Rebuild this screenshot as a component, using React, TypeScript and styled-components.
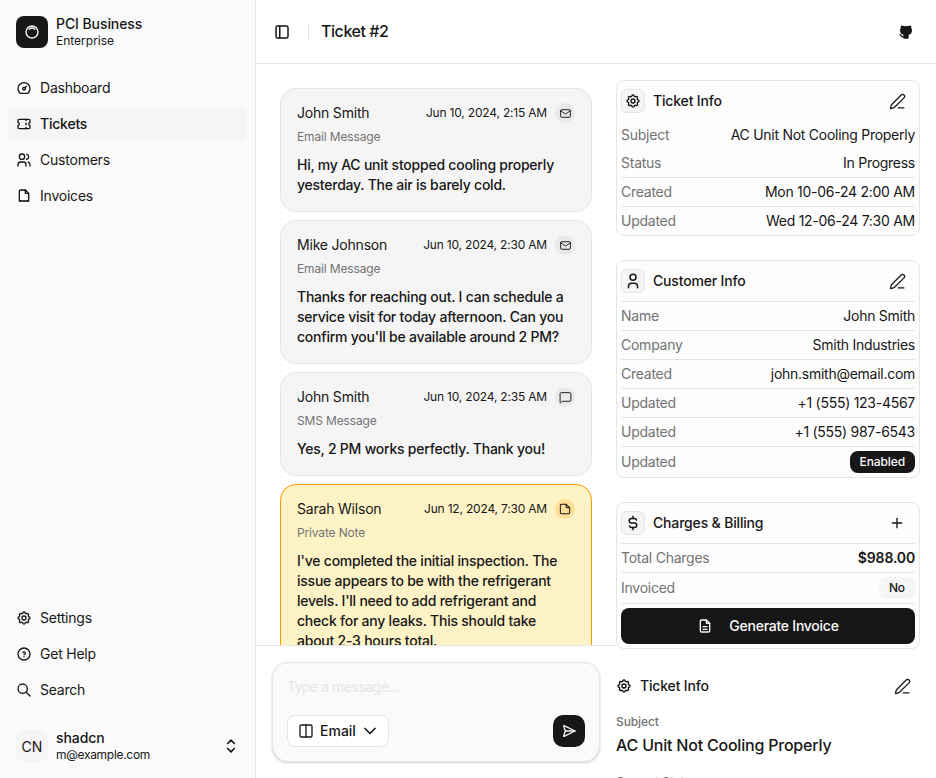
import React from "react";
import styled, { createGlobalStyle } from "styled-components";
import {
  TbBrandGithubFilled,
  TbCurrencyDollar,
  TbDashboard,
  TbFileDescription,
  TbHelpCircle,
  TbInnerShadowTop,
  TbLayoutSidebar,
  TbMail,
  TbPlus,
  TbSearch,
  TbSelector,
  TbSend2,
  TbSettings,
  TbTicket,
  TbUser,
  TbUsers,
  TbChevronDown,
} from "react-icons/tb";
import { Columns2, MessageSquare, PenLine } from "lucide-react";

const GlobalStyle = createGlobalStyle`
  html, body {
    margin: 0;
    padding: 0;
    height: 100%;
    overflow: hidden;
    background: #ffffff;
  }
  * {
    box-sizing: border-box;
  }
  body {
    font-family: Inter, "Liberation Sans", sans-serif;
    font-size: 14px;
    color: #0a0a0a;
  }
`;

const Shell = styled.div`
  display: flex;
  width: 936px;
  height: 778px;
  overflow: hidden;
`;

/* sidebar */
const Sidebar = styled.aside`
  display: flex;
  flex-direction: column;
  flex: 0 0 256px;
  padding: 8px;
  background: #fafafa;
  border-right: 1px solid #e5e5e5;
`;
const Account = styled.div`
  display: flex;
  align-items: center;
  gap: 8px;
  height: 48px;
  padding: 8px;
  flex-shrink: 0;
`;
const LogoBox = styled.div`
  display: flex;
  align-items: center;
  justify-content: center;
  width: 32px;
  height: 32px;
  border-radius: 8px;
  background: #171717;
  color: #fafafa;
`;
const Avatar = styled.div`
  display: flex;
  align-items: center;
  justify-content: center;
  width: 32px;
  height: 32px;
  border-radius: 8px;
  background: #f5f5f5;
  color: #171717;
  font-size: 14px;
`;
const AccountText = styled.div`
  display: flex;
  flex-direction: column;
  flex: 1;
`;
const AccountName = styled.span`
  font-size: 14px;
  line-height: 16px;
  padding-bottom: 1px;
  font-weight: 500;
  letter-spacing: -0.08px;
  color: #171717;
`;
const AccountSub = styled.span<{ $tight?: boolean }>`
  font-size: 12px;
  line-height: 16px;
  letter-spacing: ${(p) => (p.$tight ? "-0.3px" : "0")};
  color: #171717;
`;
const SelectorIcon = styled.span`
  display: flex;
  margin-right: -2px;
  color: #171717;
`;
const NavGroup = styled.nav<{ $bottom?: boolean }>`
  display: flex;
  flex-direction: column;
  gap: 4px;
  margin-top: ${(p) => (p.$bottom ? "auto" : "16px")};
  margin-bottom: ${(p) => (p.$bottom ? "16px" : "0")};
`;
const NavItem = styled.a<{ $active?: boolean }>`
  display: flex;
  align-items: center;
  gap: 8px;
  height: 32px;
  padding: 0 8px;
  border-radius: 8px;
  font-size: 14px;
  color: #171717;
  font-weight: ${(p) => (p.$active ? 500 : 400)};
  background: ${(p) => (p.$active ? "#f5f5f5" : "transparent")};
`;
const NavLabel = styled.span`
  padding-bottom: 2px;
  letter-spacing: -0.22px;
`;

/* main */
const Main = styled.main`
  display: flex;
  flex-direction: column;
  flex: 1;
  min-width: 0;
`;
const TopBar = styled.header`
  display: flex;
  align-items: center;
  flex: 0 0 64px;
  padding: 0 16px 0 17px;
  border-bottom: 1px solid #e5e5e5;
`;
const SidebarToggle = styled.span`
  display: flex;
  color: #171717;
`;
const TopDivider = styled.span`
  width: 1px;
  height: 16px;
  margin: 0 12px 0 17px;
  background: #e5e5e5;
`;
const TopTitle = styled.h1`
  margin: 0;
  flex: 1;
  padding-bottom: 2px;
  font-size: 16px;
  line-height: 24px;
  font-weight: 500;
  letter-spacing: -0.44px;
  color: #171717;
`;
const GithubLink = styled.a`
  display: flex;
  margin-right: 6px;
  color: #171717;
`;
const Content = styled.div`
  display: flex;
  flex: 1;
  min-height: 0;
`;

/* chat */
const ChatColumn = styled.section`
  display: flex;
  flex-direction: column;
  flex: 0 0 360px;
  min-height: 0;
`;
const MessageList = styled.div`
  display: flex;
  flex-direction: column;
  gap: 8px;
  flex: 1;
  min-height: 0;
  overflow: hidden;
  padding: 24px 24px 0;
`;
const MessageCard = styled.article<{ $note?: boolean }>`
  flex-shrink: 0;
  padding: 14px 16px 16px;
  border-radius: 16px;
  border: 1px solid ${(p) => (p.$note ? "#fe9a00" : "#e5e5e5")};
  background: ${(p) => (p.$note ? "#fef3c6" : "#f5f5f5")};
`;
const MessageHead = styled.div`
  display: flex;
  align-items: center;
  height: 20px;
`;
const Sender = styled.span`
  flex: 1;
  padding-bottom: 2px;
  font-size: 14px;
  letter-spacing: -0.2px;
  color: #171717;
`;
const Stamp = styled.span`
  padding-bottom: 2px;
  font-size: 12px;
  letter-spacing: -0.19px;
  color: #171717;
`;
const ChannelDot = styled.span<{ $note?: boolean }>`
  display: flex;
  align-items: center;
  justify-content: center;
  width: 20px;
  height: 20px;
  margin-left: 8px;
  border-radius: 50%;
  background: ${(p) => (p.$note ? "#fedf97" : "#e9e9e9")};
  color: #171717;
`;
const Channel = styled.div`
  margin-top: 6px;
  font-size: 12px;
  line-height: 16px;
  letter-spacing: -0.15px;
  color: #737373;
`;
const MessageBody = styled.p`
  margin: 10px 0 0;
  font-size: 14px;
  line-height: 20px;
  font-weight: 500;
  letter-spacing: -0.23px;
  color: #171717;
`;
const ComposerWrap = styled.div`
  flex: 0 0 133px;
  padding: 16px;
  border-top: 1px solid #e5e5e5;
  background: #ffffff;
`;
const Composer = styled.div`
  display: flex;
  flex-direction: column;
  justify-content: space-between;
  height: 100px;
  padding: 14px 14px 14px;
  border: 1px solid #e5e5e5;
  border-radius: 16px;
  background: #fafafa;
  box-shadow: 0 1px 3px rgba(0, 0, 0, 0.1), 0 1px 2px rgba(0, 0, 0, 0.1);
`;
const Placeholder = styled.div`
  font-size: 14px;
  line-height: 20px;
  letter-spacing: -0.5px;
  color: #e5e5e5;
`;
const ComposerBar = styled.div`
  display: flex;
  align-items: center;
  justify-content: space-between;
`;
const ChannelSelect = styled.button`
  display: flex;
  align-items: center;
  gap: 6px;
  width: 102px;
  height: 32px;
  padding: 0 10px;
  border: 1px solid #e5e5e5;
  border-radius: 8px;
  background: #ffffff;
  font: 500 14px Inter, sans-serif;
  color: #171717;

  svg {
    flex-shrink: 0;
  }
`;
const SelectLabel = styled.span`
  padding-bottom: 2px;
  margin-right: -2px;
`;
const SendButton = styled.button`
  display: flex;
  align-items: center;
  justify-content: center;
  width: 32px;
  height: 32px;
  padding: 0;
  border: 0;
  border-radius: 10px;
  background: #171717;
  color: #fafafa;
`;

/* details */
const Details = styled.section`
  display: flex;
  flex-direction: column;
  gap: 24px;
  flex: 1;
  min-width: 0;
  overflow: hidden;
  padding: 16px 16px 0 0;
`;
const InfoCard = styled.div`
  flex-shrink: 0;
  padding: 4px 4px 0;
  border: 1px solid #e5e5e5;
  border-radius: 8px;
  background: #fdfdfd;
`;
const CardHead = styled.div`
  display: flex;
  align-items: center;
  gap: 8px;
  height: 32px;
  margin-bottom: 4px;
`;
const IconTile = styled.span`
  display: flex;
  align-items: center;
  justify-content: center;
  width: 24px;
  height: 24px;
  border: 1px solid #e5e5e5;
  border-radius: 6px;
  background: #f5f5f5;
  color: #171717;
`;
const CardTitle = styled.span`
  flex: 1;
  padding-bottom: 2px;
  font-size: 14px;
  font-weight: 500;
  letter-spacing: -0.17px;
  color: #171717;
`;
const GhostAction = styled.span`
  display: flex;
  align-items: center;
  justify-content: center;
  width: 36px;
  height: 32px;
  color: #171717;
`;
const Row = styled.div<{ $plain?: boolean; $flush?: boolean }>`
  display: flex;
  align-items: center;
  justify-content: space-between;
  min-height: 28px;
  padding: ${(p) => (p.$flush ? "0" : "4px 0")};
  border-top: ${(p) => (p.$plain ? "0" : "1px solid #e5e5e5")};
  font-size: 14px;
  line-height: 20px;
  letter-spacing: -0.25px;
`;
const RowLabel = styled.span`
  color: #737373;
`;
const RowValue = styled.span<{ $strong?: boolean }>`
  color: #171717;
  font-weight: ${(p) => (p.$strong ? 600 : 400)};
  letter-spacing: ${(p) => (p.$strong ? "-0.15px" : "-0.27px")};
`;
const Pill = styled.span<{ $dark?: boolean }>`
  display: inline-flex;
  align-items: center;
  height: 22px;
  padding: 0 10px;
  border-radius: 8px;
  font-size: 12px;
  font-weight: 500;
  letter-spacing: -0.1px;
  background: ${(p) => (p.$dark ? "#171717" : "#f5f5f5")};
  color: ${(p) => (p.$dark ? "#fafafa" : "#171717")};
`;
const InvoiceButton = styled.button`
  display: flex;
  align-items: center;
  justify-content: center;
  gap: 16px;
  width: 100%;
  height: 36px;
  margin: 4px 0;
  border: 0;
  border-radius: 8px;
  background: #171717;
  color: #fafafa;
  font: 500 14px Inter, sans-serif;
  letter-spacing: -0.25px;
`;
const InvoiceLabel = styled.span`
  padding-bottom: 2px;
`;
const PlainSection = styled.div`
  flex-shrink: 0;
  margin-top: -3px;
`;
const PlainHead = styled.div`
  display: flex;
  align-items: center;
  gap: 8px;
  height: 32px;
`;
const FieldLabel = styled.div<{ $next?: boolean }>`
  margin-top: ${(p) => (p.$next ? "17px" : "12px")};
  font-size: 12px;
  line-height: 16px;
  font-weight: 500;
  letter-spacing: -0.1px;
  color: #737373;
`;
const FieldValue = styled.div`
  margin-top: 3px;
  font-size: 16px;
  line-height: 24px;
  font-weight: 500;
  letter-spacing: -0.21px;
  color: #171717;
`;

const FileIcon: React.FC = () => (
  <svg width="16" height="16" viewBox="0 0 24 24" fill="none" stroke="currentColor" strokeWidth="2" strokeLinecap="round" strokeLinejoin="round">
    <path d="M14 3H7a2 2 0 0 0-2 2v15l1.5-1 1.5 1 2-1 2 1 2-1 2 1 1.5-1 1.5 1V8z" />
    <path d="M14 3v5h5" />
  </svg>
);

const NoteIcon: React.FC = () => (
  <svg width="14" height="14" viewBox="0 0 24 24" fill="none" stroke="currentColor" strokeWidth="1.75" strokeLinecap="round" strokeLinejoin="round">
    <path d="M14 4H6a2 2 0 0 0-2 2v12a2 2 0 0 0 2 2h12a2 2 0 0 0 2-2v-8z" />
    <path d="M14 4v4a2 2 0 0 0 2 2h4" />
  </svg>
);

const messages = [
  {
    sender: "John Smith",
    time: "Jun 10, 2024, 2:15 AM",
    channel: "Email Message",
    icon: <TbMail size={13} strokeWidth={1.75} />,
    text: "Hi, my AC unit stopped cooling properly yesterday. The air is barely cold.",
  },
  {
    sender: "Mike Johnson",
    time: "Jun 10, 2024, 2:30 AM",
    channel: "Email Message",
    icon: <TbMail size={13} strokeWidth={1.75} />,
    text: "Thanks for reaching out. I can schedule a service visit for today afternoon. Can you confirm you'll be available around 2 PM?",
  },
  {
    sender: "John Smith",
    time: "Jun 10, 2024, 2:35 AM",
    channel: "SMS Message",
    icon: <MessageSquare size={13} strokeWidth={1.75} />,
    text: "Yes, 2 PM works perfectly. Thank you!",
  },
  {
    sender: "Sarah Wilson",
    time: "Jun 12, 2024, 7:30 AM",
    channel: "Private Note",
    icon: <NoteIcon />,
    text: "I've completed the initial inspection. The issue appears to be with the refrigerant levels. I'll need to add refrigerant and check for any leaks. This should take about 2-3 hours total.",
    note: true,
  },
];

const App: React.FC = () => {
  return (
    <Shell>
      <GlobalStyle />
      <Sidebar>
        <Account>
          <LogoBox>
            <TbInnerShadowTop size={16} />
          </LogoBox>
          <AccountText>
            <AccountName>PCI Business</AccountName>
            <AccountSub>Enterprise</AccountSub>
          </AccountText>
        </Account>
        <NavGroup>
          <NavItem>
            <TbDashboard size={16} />
            <NavLabel>Dashboard</NavLabel>
          </NavItem>
          <NavItem $active>
            <TbTicket size={16} />
            <NavLabel>Tickets</NavLabel>
          </NavItem>
          <NavItem>
            <TbUsers size={16} />
            <NavLabel>Customers</NavLabel>
          </NavItem>
          <NavItem>
            <FileIcon />
            <NavLabel>Invoices</NavLabel>
          </NavItem>
        </NavGroup>
        <NavGroup $bottom>
          <NavItem>
            <TbSettings size={16} />
            <NavLabel>Settings</NavLabel>
          </NavItem>
          <NavItem>
            <TbHelpCircle size={16} />
            <NavLabel>Get Help</NavLabel>
          </NavItem>
          <NavItem>
            <TbSearch size={16} />
            <NavLabel>Search</NavLabel>
          </NavItem>
        </NavGroup>
        <Account>
          <Avatar>CN</Avatar>
          <AccountText>
            <AccountName>shadcn</AccountName>
            <AccountSub $tight>m@example.com</AccountSub>
          </AccountText>
          <SelectorIcon>
            <TbSelector size={20} />
          </SelectorIcon>
        </Account>
      </Sidebar>
      <Main>
        <TopBar>
          <SidebarToggle>
            <TbLayoutSidebar size={18} />
          </SidebarToggle>
          <TopDivider />
          <TopTitle>Ticket #2</TopTitle>
          <GithubLink>
            <TbBrandGithubFilled size={16} />
          </GithubLink>
        </TopBar>
        <Content>
          <ChatColumn>
            <MessageList>
              {messages.map((item, index) => (
                <MessageCard key={index} $note={item.note}>
                  <MessageHead>
                    <Sender>{item.sender}</Sender>
                    <Stamp>{item.time}</Stamp>
                    <ChannelDot $note={item.note}>{item.icon}</ChannelDot>
                  </MessageHead>
                  <Channel>{item.channel}</Channel>
                  <MessageBody>{item.text}</MessageBody>
                </MessageCard>
              ))}
            </MessageList>
            <ComposerWrap>
              <Composer>
                <Placeholder>Type a message...</Placeholder>
                <ComposerBar>
                  <ChannelSelect>
                    <Columns2 size={16} />
                    <SelectLabel>Email</SelectLabel>
                    <TbChevronDown size={20} />
                  </ChannelSelect>
                  <SendButton>
                    <TbSend2 size={16} />
                  </SendButton>
                </ComposerBar>
              </Composer>
            </ComposerWrap>
          </ChatColumn>
          <Details>
            <InfoCard>
              <CardHead>
                <IconTile>
                  <TbSettings size={16} />
                </IconTile>
                <CardTitle>Ticket Info</CardTitle>
                <GhostAction>
                  <PenLine size={17} strokeWidth={1.75} />
                </GhostAction>
              </CardHead>
              <Row $plain>
                <RowLabel>Subject</RowLabel>
                <RowValue>AC Unit Not Cooling Properly</RowValue>
              </Row>
              <Row $plain>
                <RowLabel>Status</RowLabel>
                <RowValue>In Progress</RowValue>
              </Row>
              <Row>
                <RowLabel>Created</RowLabel>
                <RowValue>Mon 10-06-24 2:00 AM</RowValue>
              </Row>
              <Row>
                <RowLabel>Updated</RowLabel>
                <RowValue>Wed 12-06-24 7:30 AM</RowValue>
              </Row>
            </InfoCard>
            <InfoCard>
              <CardHead>
                <IconTile>
                  <TbUser size={18} />
                </IconTile>
                <CardTitle>Customer Info</CardTitle>
                <GhostAction>
                  <PenLine size={17} strokeWidth={1.75} />
                </GhostAction>
              </CardHead>
              <Row>
                <RowLabel>Name</RowLabel>
                <RowValue>John Smith</RowValue>
              </Row>
              <Row>
                <RowLabel>Company</RowLabel>
                <RowValue>Smith Industries</RowValue>
              </Row>
              <Row>
                <RowLabel>Created</RowLabel>
                <RowValue>john.smith@email.com</RowValue>
              </Row>
              <Row>
                <RowLabel>Updated</RowLabel>
                <RowValue>+1 (555) 123-4567</RowValue>
              </Row>
              <Row>
                <RowLabel>Updated</RowLabel>
                <RowValue>+1 (555) 987-6543</RowValue>
              </Row>
              <Row>
                <RowLabel>Updated</RowLabel>
                <Pill $dark>Enabled</Pill>
              </Row>
            </InfoCard>
            <InfoCard>
              <CardHead>
                <IconTile>
                  <TbCurrencyDollar size={18} />
                </IconTile>
                <CardTitle>Charges &amp; Billing</CardTitle>
                <GhostAction>
                  <TbPlus size={16} />
                </GhostAction>
              </CardHead>
              <Row>
                <RowLabel>Total Charges</RowLabel>
                <RowValue $strong>$988.00</RowValue>
              </Row>
              <Row>
                <RowLabel>Invoiced</RowLabel>
                <Pill>No</Pill>
              </Row>
              <Row $flush>
                <InvoiceButton>
                  <TbFileDescription size={16} />
                  <InvoiceLabel>Generate Invoice</InvoiceLabel>
                </InvoiceButton>
              </Row>
            </InfoCard>
            <PlainSection>
              <PlainHead>
                <TbSettings size={16} />
                <CardTitle>Ticket Info</CardTitle>
                <GhostAction>
                  <PenLine size={17} strokeWidth={1.75} />
                </GhostAction>
              </PlainHead>
              <FieldLabel>Subject</FieldLabel>
              <FieldValue>AC Unit Not Cooling Properly</FieldValue>
              <FieldLabel $next>Current Status</FieldLabel>
            </PlainSection>
          </Details>
        </Content>
      </Main>
    </Shell>
  );
};

export default App;
